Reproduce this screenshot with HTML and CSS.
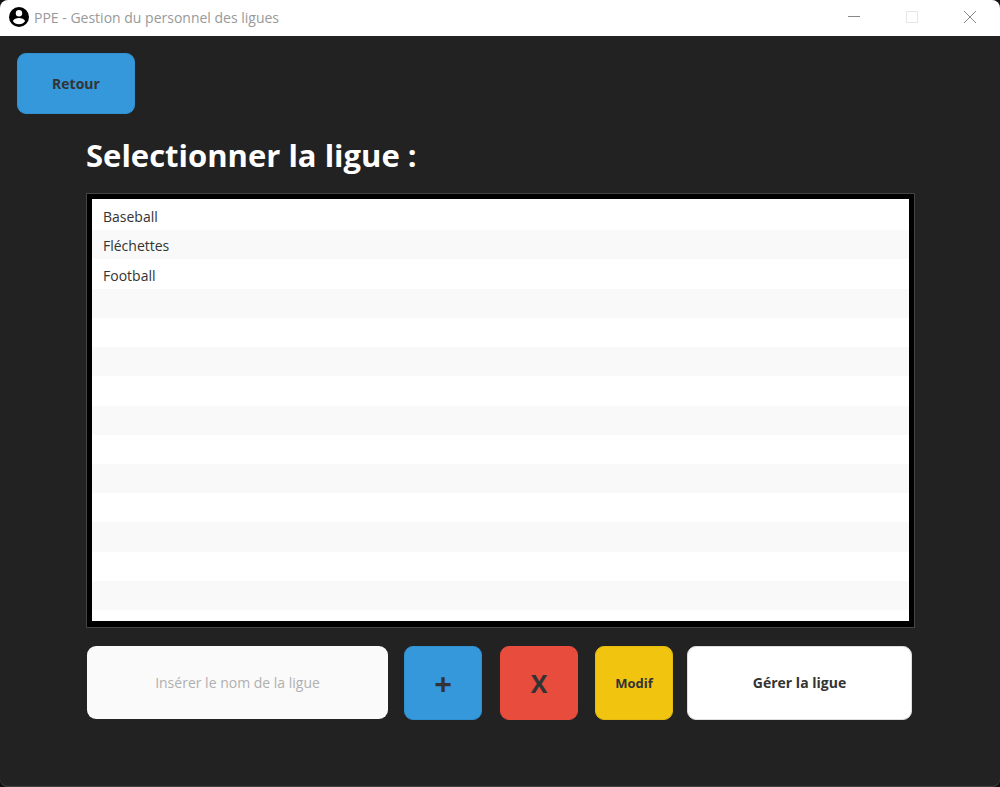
FILE: index.html
```html
<!DOCTYPE html>
<html lang="fr">
<head>
<meta charset="utf-8">
<title>PPE - Gestion du personnel des ligues</title>
<link rel="stylesheet" href="styles.css">
</head>
<body>
<div class="window">
  <header class="titlebar">
    <svg class="app-icon" viewBox="0 0 20 20" aria-hidden="true">
      <circle cx="10" cy="10" r="10"/>
      <circle class="cut" cx="10" cy="6.3" r="3.200"/>
      <path class="cut" d="M3.900 14C4.500 12 7.600 11 10 11s5.500 1 6.100 3C14.800 16.100 12.600 17.300 10 17.300s-4.800-1.200-6.100-3.300z"/>
    </svg>
    <span class="title">PPE - Gestion du personnel des ligues</span>
    <button class="win-btn" aria-label="Réduire"><svg viewBox="0 0 12 12"><path d="M0 5.500h12"/></svg></button>
    <button class="win-btn" aria-label="Agrandir" disabled><svg viewBox="0 0 12 12"><path d="M.5.500h11v11H.5z"/></svg></button>
    <button class="win-btn" aria-label="Fermer"><svg viewBox="0 0 12 12"><path d="M0 0l12 12M12 0L0 12"/></svg></button>
  </header>
  <main class="content">
    <button class="btn blue back">Retour</button>
    <section class="panel">
      <h1>Selectionner la ligue :</h1>
      <ul class="list">
        <li>Baseball</li>
        <li>Fléchettes</li>
        <li>Football</li>
        <li></li><li></li><li></li><li></li><li></li><li></li><li></li><li></li><li></li><li></li><li></li><li></li>
      </ul>
      <form class="actions">
        <input class="name" type="text" placeholder="Insérer le nom de la ligue" aria-label="Nom de la ligue">
        <button type="button" class="btn square blue plus" aria-label="Ajouter">+</button>
        <button type="button" class="btn square red cross" aria-label="Supprimer">X</button>
        <button type="button" class="btn square yellow">Modif</button>
        <button type="button" class="btn white">Gérer la ligue</button>
      </form>
    </section>
  </main>
</div>
</body>
</html>
```
FILE: styles.css
```css
* { box-sizing: border-box; }
body {
  margin: 0;
  background: #111;
  font-family: "Open Sans", "Noto Sans", sans-serif;
  font-size: 14px;
  color: #333;
}
button, input { font: inherit; color: inherit; }
.window {
  display: flex;
  flex-direction: column;
  min-height: 100vh;
  background: #222;
  border-radius: 8px;
  box-shadow: inset 0 -1px #444;
  overflow: hidden;
}
.titlebar {
  display: flex;
  align-items: center;
  height: 36px;
  padding: 0 1px 2px 9px;
  background: #fff;
  color: #999;
}
.app-icon { width: 20px; height: 20px; margin-right: 5px; }
.cut { fill: #fff; }
.title { flex: 1; }
.win-btn {
  display: grid;
  place-items: center;
  width: 58px;
  height: 34px;
  padding: 0;
  border: 0;
  background: none;
}
.win-btn svg { width: 12px; height: 12px; fill: none; stroke: #888; }
.win-btn:disabled svg { stroke: #e6e6e6; }
.content {
  flex: 1;
  display: flex;
  flex-direction: column;
  align-items: flex-start;
  padding: 17px 17px 67px;
}
.btn {
  height: 74px;
  padding: 0 0 1px;
  border: 1px solid transparent;
  border-radius: 9px;
  font-weight: 700;
}
.back { width: 118px; height: 61px; }
.blue { background: #3498db; border-color: #3190d0; }
.red { background: #e74c3c; border-color: #e74c3c; }
.yellow { background: #f1c40f; border-color: #e5ba0e; font-size: 13px; }
.white { background: #fff; border-color: #ddd; }
.panel {
  flex: 1;
  display: flex;
  flex-direction: column;
  align-self: stretch;
  margin: 17px 68px 0 69px;
}
h1 {
  margin: 0 0 14px;
  font-size: 31px;
  line-height: 48px;
  color: #fff;
}
.list {
  flex: 1;
  display: grid;
  grid-template-rows: repeat(14, 8fr) 3fr;
  margin: 0;
  padding: 2px 0 0;
  list-style: none;
  background: #fff;
  border: 6px solid #000;
  border-bottom-width: 7px;
  outline: 1px solid #444;
  outline-offset: -1px;
}
.list li {
  display: flex;
  align-items: center;
  min-height: 0;
  padding: 2px 0 0 11px;
}
.list li:nth-child(even) { background: #f9f9f9; }
.actions {
  display: grid;
  grid-template-columns: 317fr 96fr 95fr 92fr 225fr;
  margin: 18px 3px 0 1px;
}
.name {
  width: calc(100% - 16px);
  height: 73px;
  border: 0;
  border-radius: 9px;
  background: #fafafa;
  text-align: center;
}
.name::placeholder { color: #b0b0b0; opacity: 1; }
.square { width: 78px; }
.plus { font-size: 31px; }
.cross { font-size: 25px; }
```
